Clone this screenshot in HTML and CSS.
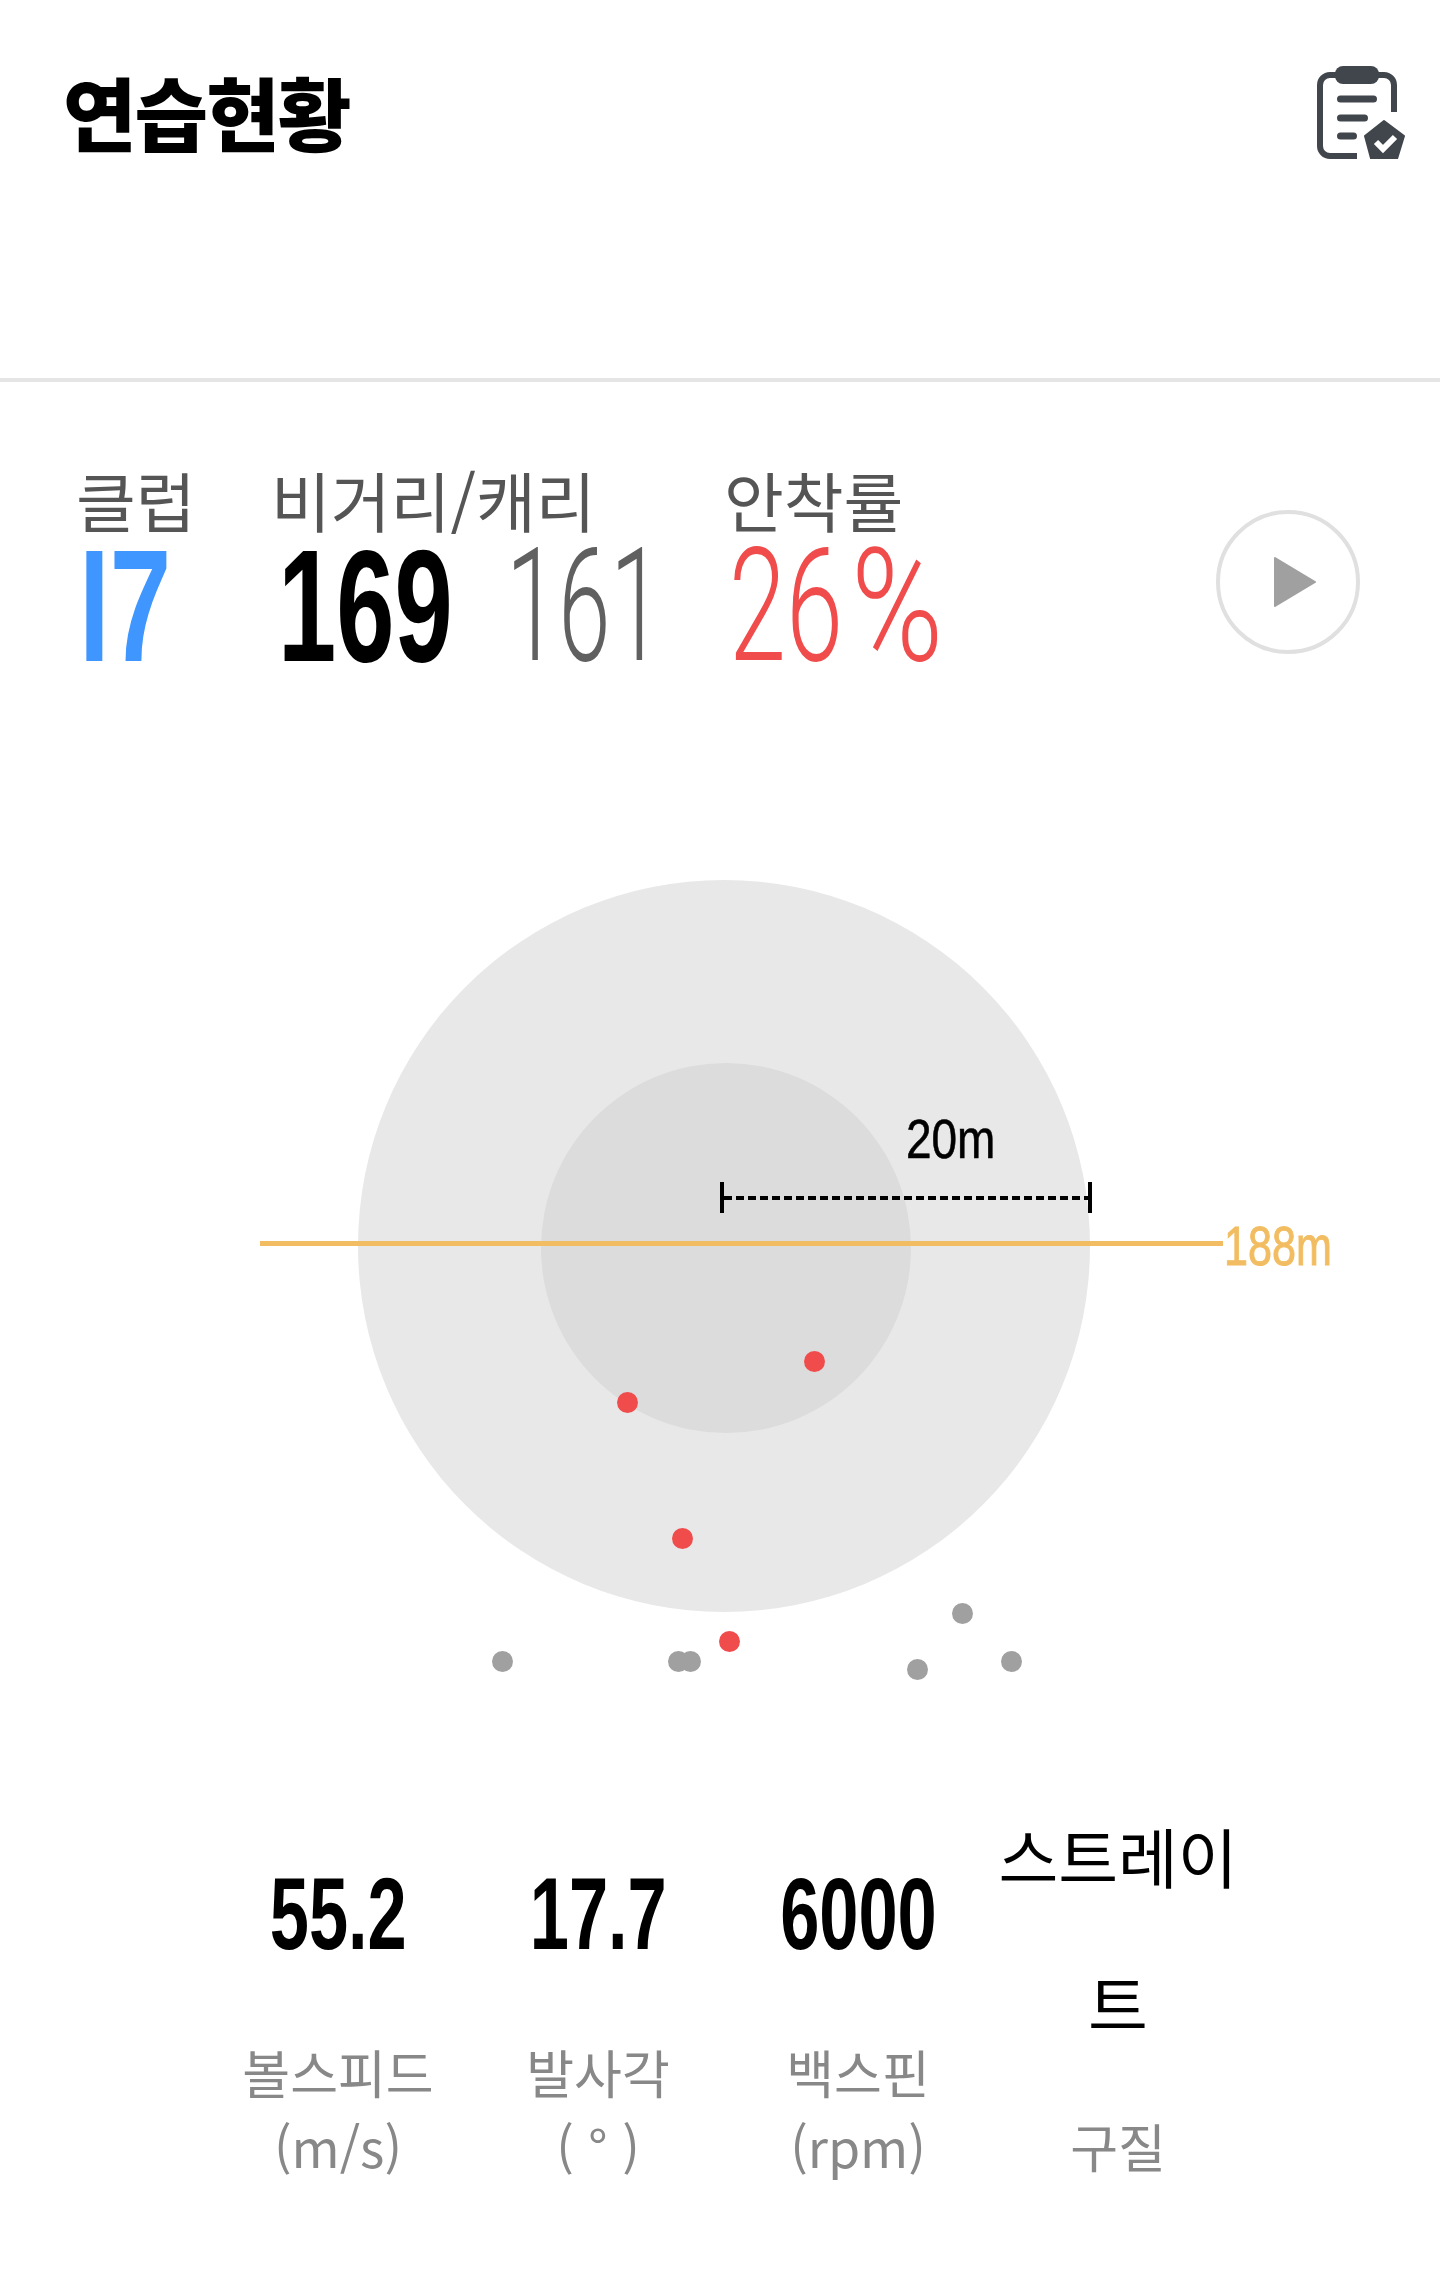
FILE: index.html
```html
<!DOCTYPE html>
<html lang="ko">
<head>
    <meta charset="UTF-8">
    <meta name="viewport" content="width=device-width, initial-scale=1.0">
    <title>연습현황</title>
    <link rel="stylesheet" href="styles.css">
</head>
<body>
    <header class="top-bar">
        <h1 class="page-title">연습현황</h1>
        <svg class="report-icon" width="96" height="93" viewBox="0 0 96 93">
            <path d="M41 90H14a10 10 0 0 1-10-10V19A10 10 0 0 1 14 9h8M60 9h8a10 10 0 0 1 10 10v27" fill="none" stroke="#41464c" stroke-width="6"/>
            <rect x="19" y="0" width="44" height="18" rx="8" fill="#41464c"/>
            <path d="M24.5 33H57.5M24.5 52H48.5M24.5 70H37.5" fill="none" stroke="#41464c" stroke-width="7" stroke-linecap="round"/>
            <path d="M68 55L88 70L80 96H56L49 70Z" fill="#41464c" stroke="#41464c" stroke-width="2" stroke-linejoin="round"/>
            <path d="M60 76L67 83L79 71" fill="none" stroke="#fff" stroke-width="6"/>
        </svg>
    </header>

    <section class="summary">
        <div class="stat stat-club">
            <div class="stat-label">클럽</div>
            <div class="stat-values"><span class="big big-club">I7</span></div>
        </div>
        <div class="stat stat-distance">
            <div class="stat-label">비거리/캐리</div>
            <div class="stat-values">
                <span class="big big-total">169</span>
                <span class="big big-carry">161</span>
            </div>
        </div>
        <div class="stat stat-rate">
            <div class="stat-label">안착률</div>
            <div class="stat-values">
                <span class="big big-rate">26</span>
                <span class="big big-rate big-percent">%</span>
            </div>
        </div>
        <button class="play-btn" type="button">
            <svg width="42" height="52" viewBox="0 0 42 52"><path d="M1 2L41 26L1 50Z" fill="#a0a0a0" stroke="#a0a0a0" stroke-width="2" stroke-linejoin="round"/></svg>
        </button>
    </section>

    <section class="chart">
        <div class="ring ring-outer"></div>
        <div class="ring ring-inner"></div>
        <div class="target-line"></div>
        <div class="target-label">188m</div>
        <div class="scale-label">20m</div>
        <div class="scale-bar"></div>
        <div class="dot dot-red" style="left:814px;top:481px"></div>
        <div class="dot dot-red" style="left:627px;top:522px"></div>
        <div class="dot dot-red" style="left:682px;top:658px"></div>
        <div class="dot dot-red" style="left:729px;top:761px"></div>
        <div class="dot dot-gray" style="left:502px;top:781px"></div>
        <div class="dot dot-gray" style="left:678px;top:781px"></div>
        <div class="dot dot-gray" style="left:690px;top:781px"></div>
        <div class="dot dot-gray" style="left:917px;top:789px"></div>
        <div class="dot dot-gray" style="left:962px;top:733px"></div>
        <div class="dot dot-gray" style="left:1011px;top:781px"></div>
    </section>

    <section class="metrics">
        <div class="metric">
            <div class="metric-value"><span class="metric-num">55.2</span></div>
            <div class="metric-label">볼스피드<br>(m/s)</div>
        </div>
        <div class="metric">
            <div class="metric-value"><span class="metric-num">17.7</span></div>
            <div class="metric-label">발사각<br>( ° )</div>
        </div>
        <div class="metric">
            <div class="metric-value"><span class="metric-num">6000</span></div>
            <div class="metric-label">백스핀<br>(rpm)</div>
        </div>
        <div class="metric">
            <div class="metric-value metric-text">스트레이트</div>
            <div class="metric-label">구질</div>
        </div>
    </section>
</body>
</html>
```

FILE: styles.css
```css
* {
    box-sizing: border-box;
}
body {
    margin: 0;
    background-color: #fff;
    font-family: "Noto Sans CJK KR", "Noto Sans", sans-serif;
    color: #000;
}
.top-bar {
    height: 382px;
    border-bottom: 4px solid #e5e5e5;
    display: flex;
    justify-content: space-between;
    align-items: flex-start;
    padding: 64px 28px 0 63px;
}
.page-title {
    margin: 0;
    font-size: 80px;
    line-height: 92px;
    font-weight: 900;
    letter-spacing: -2px;
}
.report-icon {
    margin-top: 2px;
}

/* summary row */
.summary {
    display: flex;
    padding: 78px 0 0 76px;
    height: 500px;
}
.stat-club {
    width: 195px;
}
.stat-distance {
    width: 453px;
}
.stat-rate {
    width: 492px;
}
.stat-label {
    font-size: 65px;
    line-height: 78px;
    color: #555;
    white-space: nowrap;
}
.stat-values {
    display: flex;
    height: 130px;
    margin-top: 3px;
}
.big {
    display: block;
    font-family: "Liberation Sans Narrow", "Liberation Sans", sans-serif;
    font-size: 160px;
    line-height: 130px;
    transform-origin: left center;
    white-space: nowrap;
}
.big-club {
    color: #4096ff;
    font-weight: 700;
    margin-left: 3px;
    transform: scaleX(0.69);
}
.big-total {
    width: 228px;
    margin-left: 7px;
    font-weight: 700;
    transform: scaleX(0.654);
}
.big-carry {
    font-family: Roboto, sans-serif;
    font-weight: 300;
    font-size: 158px;
    color: #606060;
    transform: scaleX(0.595);
}
.big-rate {
    width: 122px;
    margin-left: 5px;
    font-family: Roboto, sans-serif;
    font-weight: 300;
    font-size: 158px;
    color: #f04c4c;
    transform: scaleX(0.65);
}
.big-percent {
    margin-left: 0;
    transform: scaleX(0.79);
}
.play-btn {
    width: 144px;
    height: 144px;
    margin-top: 50px;
    padding: 0 0 0 14px;
    border: 4px solid #e0e0e0;
    border-radius: 50%;
    background-color: #fff;
    display: flex;
    align-items: center;
    justify-content: center;
}

/* dispersion chart */
.chart {
    position: relative;
    height: 900px;
    margin-top: -2px;
}
.ring {
    position: absolute;
    border-radius: 50%;
}
.ring-outer {
    left: 358px;
    top: 0;
    width: 732px;
    height: 732px;
    background-color: #e8e8e8;
}
.ring-inner {
    left: 541px;
    top: 183px;
    width: 370px;
    height: 370px;
    background-color: #dcdcdc;
}
.target-line {
    position: absolute;
    left: 260px;
    top: 361px;
    width: 963px;
    height: 5px;
    background-color: #f2bd62;
}
.target-label {
    position: absolute;
    left: 1224px;
    top: 338px;
    font-family: "Liberation Sans Narrow", "Liberation Sans", sans-serif;
    font-size: 56px;
    line-height: 56px;
    color: #f2bd62;
    -webkit-text-stroke: 1px #f2bd62;
    transform: scaleX(0.77);
    transform-origin: left center;
}
.scale-label {
    position: absolute;
    left: 906px;
    top: 231px;
    font-family: "Liberation Sans Narrow", "Liberation Sans", sans-serif;
    font-size: 56px;
    line-height: 56px;
    -webkit-text-stroke: 0.6px #000;
    transform: scaleX(0.82);
    transform-origin: left center;
}
.scale-bar {
    position: absolute;
    left: 720px;
    top: 302px;
    width: 372px;
    height: 31px;
    border-left: 4px solid #000;
    border-right: 4px solid #000;
    background-image: repeating-linear-gradient(90deg, #000 0 8px, transparent 8px 12px);
    background-size: 100% 4px;
    background-position: 0 center;
    background-repeat: no-repeat;
}
.dot {
    position: absolute;
    width: 21px;
    height: 21px;
    margin: -10px 0 0 -10px;
    border-radius: 50%;
}
.dot-red {
    background-color: #f04c4c;
}
.dot-gray {
    background-color: #a0a0a0;
}

/* bottom metrics */
.metrics {
    display: flex;
    align-items: flex-end;
    padding-left: 208px;
    margin-top: 2px;
}
.metric {
    width: 260px;
    text-align: center;
}
.metric-value {
    height: 145px;
    display: flex;
    align-items: center;
    justify-content: center;
    margin-bottom: 48px;
}
.metric-num {
    font-family: "Liberation Sans Narrow", "Liberation Sans", sans-serif;
    font-weight: 700;
    font-size: 102px;
    transform: scaleX(0.69);
}
.metric-text {
    display: block;
    height: auto;
    padding: 0;
    font-size: 65px;
    line-height: 147px;
    margin-bottom: 33px;
}
.metric-label {
    font-size: 52px;
    line-height: 74px;
    color: #888;
}
```
